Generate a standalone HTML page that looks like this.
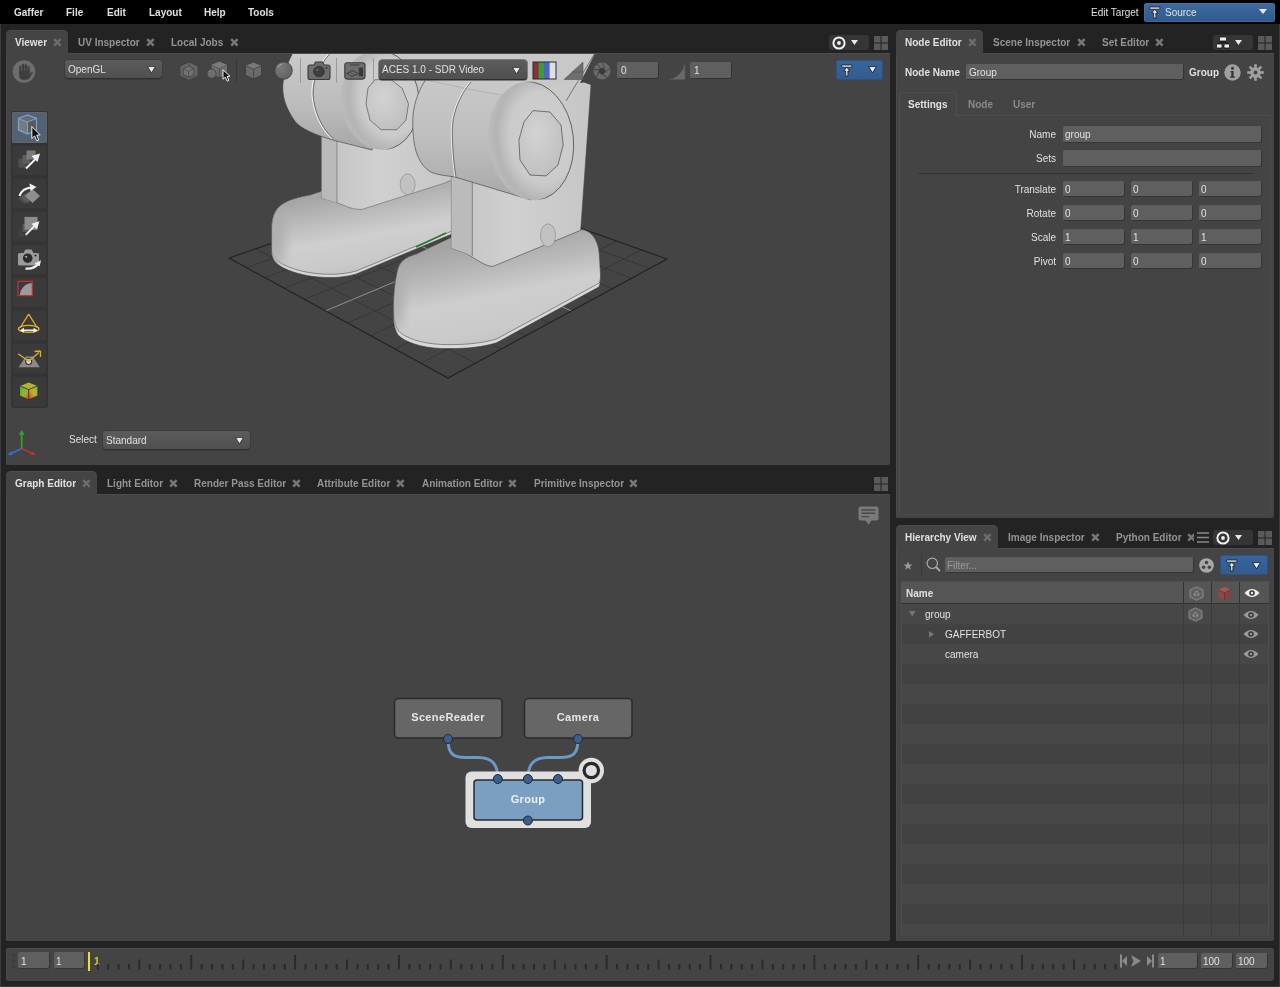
<!DOCTYPE html><html><head><meta charset="utf-8"><style>
html,body{margin:0;padding:0;} body{width:1280px;height:987px;position:relative;overflow:hidden;background:#232323;font-family:"Liberation Sans", sans-serif;}
.t{position:absolute;white-space:nowrap;will-change:transform;}
svg{overflow:visible}
</style></head><body>
<div style="position:absolute;left:0px;top:24px;width:1px;height:963px;background:#3c3c3c"></div>
<div style="position:absolute;left:1279px;top:24px;width:1px;height:963px;background:#3c3c3c"></div>
<div style="position:absolute;left:0px;top:986px;width:1280px;height:1px;background:#3c3c3c"></div>
<div style="position:absolute;left:0px;top:0px;width:1280px;height:24px;background:#000"></div>
<div class="t" style="left:14px;top:7.54px;font-size:10px;line-height:10px;font-weight:bold;color:#e0e0e0;">Gaffer</div>
<div class="t" style="left:66px;top:7.54px;font-size:10px;line-height:10px;font-weight:bold;color:#e0e0e0;">File</div>
<div class="t" style="left:106.5px;top:7.54px;font-size:10px;line-height:10px;font-weight:bold;color:#e0e0e0;">Edit</div>
<div class="t" style="left:149px;top:7.54px;font-size:10px;line-height:10px;font-weight:bold;color:#e0e0e0;">Layout</div>
<div class="t" style="left:203.5px;top:7.54px;font-size:10px;line-height:10px;font-weight:bold;color:#e0e0e0;">Help</div>
<div class="t" style="left:248px;top:7.54px;font-size:10px;line-height:10px;font-weight:bold;color:#e0e0e0;">Tools</div>
<div class="t" style="left:1091px;top:7.54px;font-size:10px;line-height:10px;font-weight:normal;color:#e0e0e0;">Edit Target</div>
<div style="position:absolute;left:1144px;top:2.5px;width:130.5px;height:19.3px;background:linear-gradient(#3d6aa0,#2f5a8c);border-radius:3px;box-shadow:inset 0 0 0 0.6px #4a78ad"></div>
<div class="t" style="left:1165px;top:7.54px;font-size:10px;line-height:10px;font-weight:normal;color:#e0e0e0;">Source</div>
<svg style="position:absolute;left:1149px;top:6px;" width="12" height="13" viewBox="0 0 12 13"><g transform="translate(0.7,0.7)"><path d="M0,0.3H10.2V2.5H0Z M5.1,2.6L8.2,6.3H6.2V11.4H4V6.3H2Z" fill="#f0f0f0" stroke="#151515" stroke-width="0.8" stroke-linejoin="round"/></g></svg>
<svg style="position:absolute;left:1259px;top:9px;" width="9" height="6" viewBox="0 0 9 6"><path d="M0,0H8L4,5z" fill="#e8e8e8"/></svg>
<div style="position:absolute;left:6px;top:53px;width:884px;height:412px;background:#444444;border-radius:0 0 2px 2px;box-shadow:inset 0 1px 0 #4c4c4c, inset 1px 0 0 #4b4b4b"></div>
<svg style="position:absolute;left:6px;top:54px;overflow:hidden" width="884" height="410" viewBox="0 0 884 410"><svg x="0" y="0" width="884" height="410" viewBox="6 54 884 410" style="overflow:hidden"><path d="M246.6,267.7L469.2,188.5M255.7,248.9L475.5,363.1" stroke="#363636" stroke-width="0.9" fill="none"/><path d="M265.0,277.7L488.0,195.2M281.2,240.1L501.5,349.0" stroke="#363636" stroke-width="0.9" fill="none"/><path d="M284.2,288.3L507.5,202.1M305.6,231.8L526.0,335.6" stroke="#363636" stroke-width="0.9" fill="none"/><path d="M304.4,299.3L527.8,209.4M329.0,223.8L549.3,322.9" stroke="#363636" stroke-width="0.9" fill="none"/><path d="M325.5,310.9L548.8,216.9M351.4,216.1L571.4,310.9" stroke="#9a9a9a" stroke-width="0.9" fill="none"/><path d="M347.6,323.0L570.6,224.6M373.0,208.7L592.4,299.5" stroke="#363636" stroke-width="0.9" fill="none"/><path d="M370.8,335.7L593.3,232.7M393.6,201.6L612.4,288.6" stroke="#363636" stroke-width="0.9" fill="none"/><path d="M395.2,349.1L616.9,241.1M413.5,194.8L631.5,278.3" stroke="#363636" stroke-width="0.9" fill="none"/><path d="M420.9,363.2L641.4,249.9M432.6,188.3L649.7,268.4" stroke="#363636" stroke-width="0.9" fill="none"/><path d="M229.0,258.0L448.0,378.0L667.0,259.0L451.0,182.0Z" stroke="#222" stroke-width="1.1" fill="none"/>
<defs>
<filter id="bl6" x="-50%" y="-50%" width="200%" height="200%"><feGaussianBlur stdDeviation="6"/></filter>
<filter id="bl3" x="-50%" y="-50%" width="200%" height="200%"><feGaussianBlur stdDeviation="3"/></filter>
<linearGradient id="gLF" gradientUnits="userSpaceOnUse" x1="345" y1="196" x2="360" y2="278">
 <stop offset="0" stop-color="#a6a6a6"/><stop offset="0.3" stop-color="#bdbdbd"/><stop offset="0.55" stop-color="#cfcfcf"/><stop offset="0.85" stop-color="#c9c9c9"/><stop offset="1" stop-color="#c0c0c0"/></linearGradient>
<linearGradient id="gRF" gradientUnits="userSpaceOnUse" x1="485" y1="245" x2="505" y2="348">
 <stop offset="0" stop-color="#a4a4a4"/><stop offset="0.28" stop-color="#b9b9b9"/><stop offset="0.52" stop-color="#cecece"/><stop offset="0.85" stop-color="#cacaca"/><stop offset="1" stop-color="#c1c1c1"/></linearGradient>
<linearGradient id="gShin" x1="0" y1="0" x2="1" y2="0">
 <stop offset="0" stop-color="#c3c3c3"/><stop offset="0.45" stop-color="#d0d0d0"/><stop offset="1" stop-color="#c6c6c6"/></linearGradient>
<linearGradient id="gCylR" gradientUnits="userSpaceOnUse" x1="413" y1="0" x2="574" y2="0">
 <stop offset="0" stop-color="#b3b3b3"/><stop offset="0.2" stop-color="#c6c6c6"/><stop offset="0.42" stop-color="#cdcdcd"/><stop offset="0.5" stop-color="#b4b4b4"/><stop offset="0.62" stop-color="#c8c8c8"/><stop offset="1" stop-color="#c2c2c2"/></linearGradient>
<linearGradient id="gCylL" gradientUnits="userSpaceOnUse" x1="283" y1="0" x2="419" y2="0">
 <stop offset="0" stop-color="#b0b0b0"/><stop offset="0.2" stop-color="#c0c0c0"/><stop offset="0.38" stop-color="#c9c9c9"/><stop offset="0.47" stop-color="#b3b3b3"/><stop offset="0.6" stop-color="#c8c8c8"/><stop offset="1" stop-color="#c4c4c4"/></linearGradient>
<radialGradient id="gDisc" cx="0.4" cy="0.35" r="0.75">
 <stop offset="0" stop-color="#d3d3d3"/><stop offset="1" stop-color="#bebebe"/></radialGradient>
<linearGradient id="gBodyL" gradientUnits="userSpaceOnUse" x1="0" y1="55" x2="0" y2="150">
 <stop offset="0" stop-color="#c9c9c9"/><stop offset="0.5" stop-color="#bdbdbd"/><stop offset="1" stop-color="#a6a6a6"/></linearGradient>
<linearGradient id="gBodyR" gradientUnits="userSpaceOnUse" x1="0" y1="80" x2="0" y2="200">
 <stop offset="0" stop-color="#c8c8c8"/><stop offset="0.5" stop-color="#bebebe"/><stop offset="1" stop-color="#a8a8a8"/></linearGradient>
<radialGradient id="gRing" cx="0.62" cy="0.5" r="0.62" fx="0.66" fy="0.45">
 <stop offset="0" stop-color="#d0d0d0"/><stop offset="0.62" stop-color="#cbcbcb"/><stop offset="0.85" stop-color="#b4b4b4"/><stop offset="1" stop-color="#bcbcbc"/></radialGradient>
<linearGradient id="gRingStroke" x1="0" y1="0" x2="1" y2="0">
 <stop offset="0" stop-color="#3a3a3a" stop-opacity="0"/><stop offset="0.5" stop-color="#3a3a3a" stop-opacity="0"/><stop offset="0.62" stop-color="#3a3a3a" stop-opacity="1"/><stop offset="1" stop-color="#3a3a3a" stop-opacity="1"/></linearGradient>
<clipPath id="cRF"><path id="pRF" d="M393.4,314C393,300 394,285 397,272C399,262 405,257 415.8,254.3L450,238L581,229.5C590,230 597,238 599,251L600.5,275L600,284L598.8,287L496.5,342.8C480,348 460,349 441.5,348.5C420,347.5 405,342 398,335C394,328 393.4,322 393.4,314Z"/></clipPath>
<clipPath id="cLF"><path d="M271.5,227C272,215 276,209 281,205C289,199 300,197 310,195L323,190.8L452,176L452,234L355.8,274.2C345,277 337,277.5 329.8,277.5C315,277.5 300,275 288,270C278,266 272,261 271.5,252Z"/></clipPath>
</defs>
<!-- top knee region -->
<path d="M292.5,53.5L595,53.5L580,83L591,86L545,100L470,100L424,100L300,70Z" fill="#c8c8c8"/>
<!-- LEFT FOOT -->
<g clip-path="url(#cLF)">
<rect x="260" y="170" width="200" height="120" fill="#d8d8d8"/>
<path d="M271.5,227C272,215 276,209 281,205C289,199 300,197 310,195L323,190.8L452,176L452,234L355.8,274.2C345,277 337,277.5 329.8,277.5C315,277.5 300,275 288,270C278,266 272,261 271.5,252Z" transform="translate(0.5,-3.2)" fill="url(#gLF)" stroke="#505050" stroke-width="0.6"/>
<ellipse cx="276" cy="238" rx="8" ry="30" fill="#acacac" filter="url(#bl6)"/>
</g>
<path d="M271.5,227C272,215 276,209 281,205C289,199 300,197 310,195L323,190.8L452,176L452,234L355.8,274.2C345,277 337,277.5 329.8,277.5C315,277.5 300,275 288,270C278,266 272,261 271.5,252Z" fill="none" stroke="#3a3a3a" stroke-width="0.6"/>
<!-- LEFT SHIN -->
<path d="M321.7,130L321.7,198L339.6,203.7C348,207 352,209.4 362,209.4L443.3,183.5L452,180L452,95L400,118Z" fill="url(#gShin)" stroke="#555" stroke-width="0.5"/>
<path d="M321.7,135L321.7,198L337,203L337,140Z" fill="#b9b9b9"/>
<path d="M337,140V203" stroke="#555" stroke-width="0.5"/>
<ellipse cx="407.6" cy="184.3" rx="7.5" ry="10.3" fill="#c2c2c2" stroke="#777" stroke-width="0.5"/>
<path d="M416,247L446,233" stroke="#2d7a2d" stroke-width="1.8"/>
<!-- LEFT CYLINDER -->
<path d="M292.5,53.5C288,62 283,74 282.7,88C283,100 287,110 295.3,121.7C300,127 307,131 320,136L335,140.6L372,150L381,100L381,53.5Z" fill="url(#gBodyL)" stroke="#3a3a3a" stroke-width="0.6"/>
<ellipse cx="380" cy="100" rx="39" ry="50" fill="url(#gRing)" stroke="url(#gRingStroke)" stroke-width="0.7" transform="rotate(-6 380 100)"/>
<path d="M329,53.5C318,66 311,80 312,95C313,110 320,128 332,138.6" fill="none" stroke="#f0f0f0" stroke-width="1.2"/>
<path d="M330,53.5C319,66 312.5,80 313.2,95C314,110 321,128 333,138.6" fill="none" stroke="#333" stroke-width="0.6"/>
<path d="M375,79.7L391,79.7L402,88L408.5,104L406,120L397,129.7L381,129.7L370,120L366,104L368,88Z" fill="url(#gDisc)" stroke="#444" stroke-width="0.6"/>
<!-- RIGHT FOOT -->
<g clip-path="url(#cRF)">
<rect x="385" y="220" width="225" height="135" fill="#d9d9d9"/>
<path d="M393.4,314C393,300 394,285 397,272C399,262 405,257 415.8,254.3L450,238L581,229.5C590,230 597,238 599,251L600.5,275L600,284L598.8,287L496.5,342.8C480,348 460,349 441.5,348.5C420,347.5 405,342 398,335C394,328 393.4,322 393.4,314Z" transform="translate(0.5,-4)" fill="url(#gRF)" stroke="#505050" stroke-width="0.6"/>
<ellipse cx="396" cy="296" rx="7" ry="34" fill="#acacac" filter="url(#bl6)"/>
</g>
<path d="M393.4,314C393,300 394,285 397,272C399,262 405,257 415.8,254.3L450,238L581,229.5C590,230 597,238 599,251L600.5,275L600,284L598.8,287L496.5,342.8C480,348 460,349 441.5,348.5C420,347.5 405,342 398,335C394,328 393.4,322 393.4,314Z" fill="none" stroke="#3a3a3a" stroke-width="0.6"/>
<!-- RIGHT SHIN -->
<path d="M451.4,100L451.4,248L465,253C478,260 485,266.4 493,266.4L580.7,230.3L591,85L584,82.6Z" fill="url(#gShin)"/><path d="M451.4,100L451.4,248L465,253C478,260 485,266.4 493,266.4L580.7,230.3L591,85" fill="none" stroke="#444" stroke-width="0.6"/><path d="M594.7,53.5L566,101" stroke="#3a3a3a" stroke-width="0.6"/>
<path d="M451.4,150L451.4,248L465,253L472.3,256L472.3,160Z" fill="#bbbbbb"/>
<path d="M472.3,175V256" stroke="#555" stroke-width="0.6"/>
<ellipse cx="548" cy="235.3" rx="7.5" ry="11.5" fill="#c2c2c2" stroke="#777" stroke-width="0.5"/>
<!-- RIGHT CYLINDER -->
<path d="M425.6,79.7C420,88 414.7,100 413,115C412.3,128 413,145 417.8,156C421,164 426,170 433,173L441,175L455,177L531,200L531,85L502,95L468,89Z" fill="url(#gBodyR)"/><path d="M425.6,79.7C420,88 414.7,100 413,115C412.3,128 413,145 417.8,156C421,164 426,170 433,173L441,175L455,177L531,200" fill="none" stroke="#3a3a3a" stroke-width="0.6"/><path d="M425.6,79.7L468,89L502,95L520,90" fill="none" stroke="#9a9a9a" stroke-width="0.5"/>
<path d="M470,82C458,96 451,115 451.3,131.6C451.5,150 453,165 455,177" fill="none" stroke="#ececec" stroke-width="1.1"/>
<path d="M471,82C459,96 452,115 452.3,131.6C452.5,150 454,165 456,177" fill="none" stroke="#383838" stroke-width="0.6"/>
<ellipse cx="531" cy="141" rx="42.5" ry="59.4" fill="url(#gRing)" stroke="url(#gRingStroke)" stroke-width="0.7" transform="rotate(-6 531 141)"/>
<path d="M533,110.6L550,112L561,125L563.2,145L558,165L546,175.9L530,175L520,160L518.9,140L524,122Z" fill="url(#gDisc)" stroke="#333" stroke-width="0.6"/>
</svg></svg>
<div style="position:absolute;left:6px;top:30px;width:62px;height:24px;background:#444444;border-radius:5px 5px 0 0;box-shadow:inset 0 1px 0 #4c4c4c"></div>
<div class="t" style="left:15px;top:37.53px;font-size:10px;line-height:10px;font-weight:bold;color:#e0e0e0;">Viewer</div>
<svg style="position:absolute;left:52.7px;top:37.5px" width="9" height="9"><path d="M1.2,1.2L7.6,7.6M7.6,1.2L1.2,7.6" stroke="#6c6c6c" stroke-width="2.5"/></svg>
<div class="t" style="left:78.25px;top:37.53px;font-size:10px;line-height:10px;font-weight:bold;color:#949494;">UV Inspector</div>
<svg style="position:absolute;left:145.7px;top:37.5px" width="9" height="9"><path d="M1.2,1.2L7.6,7.6M7.6,1.2L1.2,7.6" stroke="#777777" stroke-width="2.5"/></svg>
<div class="t" style="left:171.25px;top:37.53px;font-size:10px;line-height:10px;font-weight:bold;color:#949494;">Local Jobs</div>
<svg style="position:absolute;left:229.7px;top:37.5px" width="9" height="9"><path d="M1.2,1.2L7.6,7.6M7.6,1.2L1.2,7.6" stroke="#777777" stroke-width="2.5"/></svg>
<div style="position:absolute;left:829px;top:35px;width:40px;height:15px;background:#353535;border-radius:3px"></div>
<svg style="position:absolute;left:832px;top:36px;" width="14" height="14" viewBox="0 0 14 14"><circle cx="7" cy="7" r="5.6" fill="none" stroke="#f0f0f0" stroke-width="2"/><circle cx="7" cy="7" r="1.9" fill="#f0f0f0"/></svg>
<svg style="position:absolute;left:851px;top:40px;" width="8" height="6" viewBox="0 0 8 6"><path d="M0,0H7L3.5,5z" fill="#e8e8e8"/></svg>
<svg style="position:absolute;left:873.5px;top:35.5px;" width="14" height="14" viewBox="0 0 14 14"><g fill="#5a5a5a"><rect x="0" y="0" width="6.5" height="6.5"/><rect x="7.5" y="0" width="6.5" height="6.5"/><rect x="0" y="7.5" width="6.5" height="6.5"/><rect x="7.5" y="7.5" width="6.5" height="6.5"/></g></svg>
<svg style="position:absolute;left:12px;top:60px;" width="24" height="24" viewBox="0 0 24 24"><circle cx="12" cy="11.5" r="11.3" fill="#6d6d6d"/><g fill="#3e3e3e"><rect x="7.2" y="5.5" width="2.3" height="9" rx="1.15"/><rect x="10" y="3.8" width="2.3" height="9" rx="1.15"/><rect x="12.8" y="4.3" width="2.3" height="9" rx="1.15"/><rect x="15.5" y="6" width="2.2" height="8" rx="1.1"/><path d="M7.2,11H17.7V14.5L19.5,12Q20.3,11.3 20.8,12Q21,12.6 20.4,13.4L17.3,18.2Q16,19.8 13.6,19.8H11.4Q7.2,19.8 7.2,15.5Z"/></g></svg>
<div style="position:absolute;left:65px;top:60px;width:97px;height:19px;background:linear-gradient(#5c5c5c,#4f4f4f);border-radius:3px;box-shadow:inset 0 -1px 0 #2d2d2d, 0 0 0 0.5px #353535"></div>
<div class="t" style="left:68px;top:65.03px;font-size:10px;line-height:10px;font-weight:normal;color:#e0e0e0;">OpenGL</div>
<svg style="position:absolute;left:147px;top:66.0px;" width="9" height="8" viewBox="0 0 9 8"><path d="M0.6,0.6H8.4L4.5,6.8z" fill="#eeeeee" stroke="#222" stroke-width="0.7" stroke-linejoin="round"/></svg>
<svg style="position:absolute;left:179px;top:61px;" width="20" height="20" viewBox="0 0 20 20"><path d="M10,0.8L19.2,5.2V15L10,19.4L0.8,15V5.2Z" fill="#656565" stroke="#3c3c3c" stroke-width="0.9"/><path d="M10,1V5.5M3,14.2L10,17.5L17,14.2" stroke="#4c4c4c" stroke-width="0.8" fill="none"/><path d="M9.5,5.2L14.8,7.8V13.6L9.5,16.2L4.2,13.6V7.8Z" fill="#737373" stroke="#444" stroke-width="0.8"/><path d="M4.2,7.8L9.5,10.4L14.8,7.8M9.5,10.4V16.2" fill="none" stroke="#4a4a4a" stroke-width="0.8"/></svg>
<svg style="position:absolute;left:205px;top:61px;" width="24" height="19" viewBox="0 0 24 19"><path d="M6,4L14.3,0.5L22.5,4V13.5L14.3,17L6,13.5Z" fill="#6e6e6e" stroke="#3c3c3c" stroke-width="0.9"/><path d="M6,4L14.3,7.3L22.5,4M14.3,7.3V17" fill="none" stroke="#444" stroke-width="0.9"/><path d="M6,4L14.3,0.5L22.5,4L14.3,7.3Z" fill="#7a7a7a"/><circle cx="6.6" cy="12.8" r="4.6" fill="#6e6e6e" stroke="#3c3c3c" stroke-width="0.8"/><path d="M4,11Q4.8,9.6 6.2,9.3" stroke="#999" stroke-width="0.8" fill="none"/></svg>
<svg style="position:absolute;left:221.5px;top:68.5px;" width="9" height="13" viewBox="0 0 9 13"><path d="M1,0.8V10.2L3.3,8.2L5.2,12.2L6.9,11.4L5.1,7.5L8,7.3Z" fill="#111" stroke="#eee" stroke-width="1"/></svg>
<div style="position:absolute;left:235.5px;top:58px;width:1px;height:24px;background:#383838"></div>
<svg style="position:absolute;left:245px;top:62px;" width="17" height="17.5" viewBox="0 0 17 17.5"><path d="M8.5,0.5L16.5,3.8V13.3L8.5,17L0.5,13.3V3.8Z" fill="#6a6a6a" stroke="#3c3c3c" stroke-width="0.9"/><path d="M0.5,3.8L8.5,0.5L16.5,3.8L8.5,7.2Z" fill="#787878"/><path d="M0.5,3.8L8.5,7.2L16.5,3.8M8.5,7.2V17" fill="none" stroke="#444" stroke-width="0.9"/></svg>
<svg style="position:absolute;left:273.5px;top:61px;" width="19" height="19" viewBox="0 0 19 19"><defs><radialGradient id="sph" cx="0.35" cy="0.3" r="0.75"><stop offset="0" stop-color="#7a7a7a"/><stop offset="1" stop-color="#626262"/></radialGradient></defs><circle cx="9.5" cy="9.5" r="8.8" fill="url(#sph)" stroke="#3c3c3c" stroke-width="0.8"/><path d="M3.8,6.5Q5,3.6 7.8,3" stroke="#b0b0b0" stroke-width="1" fill="none"/></svg>
<div style="position:absolute;left:300px;top:58px;width:1px;height:24.5px;background:#9a9a9a"></div>
<svg style="position:absolute;left:306.5px;top:60.5px;" width="24" height="20" viewBox="0 0 24 20"><path d="M7,4L8.5,1H15.5L17,4H21Q23,4 23,6V16.5Q23,18.5 21,18.5H3Q1,18.5 1,16.5V6Q1,4 3,4Z" fill="#6e6e6e" stroke="#3a3a3a" stroke-width="1.1"/><circle cx="12" cy="10.5" r="5.3" fill="#3e3e3e" stroke="#303030" stroke-width="0.8"/><circle cx="10.3" cy="8.8" r="0.9" fill="#8a8a8a"/><circle cx="19.5" cy="7" r="1" fill="#3a3a3a"/></svg>
<div style="position:absolute;left:336px;top:58px;width:1px;height:24.5px;background:#9a9a9a"></div>
<svg style="position:absolute;left:343.5px;top:61.5px;" width="22" height="18" viewBox="0 0 22 18"><rect x="0.8" y="0.8" width="20.2" height="16.3" rx="2.5" fill="#6e6e6e" stroke="#3a3a3a" stroke-width="1.1"/><path d="M6,3H15.5" stroke="#3a3a3a" stroke-width="1"/><path d="M2.5,11.5L8,8.5L14.5,11.5L8,14.5Z" fill="none" stroke="#3a3a3a" stroke-width="0.9"/><path d="M5,10L11.5,13" stroke="#3a3a3a" stroke-width="0.6"/><rect x="14.8" y="5.5" width="4.2" height="8.8" fill="#3a3a3a"/></svg>
<div style="position:absolute;left:372.5px;top:58px;width:1px;height:24.5px;background:#9a9a9a"></div>
<div style="position:absolute;left:379px;top:60px;width:148px;height:20px;background:linear-gradient(#5c5c5c,#4f4f4f);border-radius:3px;box-shadow:inset 0 -1px 0 #2d2d2d, 0 0 0 0.5px #353535"></div>
<div class="t" style="left:382px;top:64.53px;font-size:10px;line-height:10px;font-weight:normal;color:#e0e0e0;">ACES 1.0 - SDR Video</div>
<svg style="position:absolute;left:512px;top:66.5px;" width="9" height="8" viewBox="0 0 9 8"><path d="M0.6,0.6H8.4L4.5,6.8z" fill="#eeeeee" stroke="#222" stroke-width="0.7" stroke-linejoin="round"/></svg>
<svg style="position:absolute;left:532px;top:61px;" width="25" height="19" viewBox="0 0 25 19"><rect x="0.5" y="0.5" width="24" height="18" fill="#2a2a2a"/><rect x="1.5" y="1.5" width="5" height="16" fill="#8c3232"/><rect x="6.5" y="1.5" width="5.5" height="16" fill="#3f9a3f"/><rect x="12" y="1.5" width="5.5" height="16" fill="#4a64c8"/><rect x="17.5" y="1.5" width="6" height="16" fill="#e0e0e0"/></svg>
<svg style="position:absolute;left:563px;top:61px;" width="21" height="19" viewBox="0 0 21 19"><path d="M1,18.5L20,1V18.5Z" fill="#6e6e6e" stroke="#555" stroke-width="0.6"/><path d="M9,11H20" stroke="#5a5a5a" stroke-width="1"/></svg>
<svg style="position:absolute;left:593px;top:62px;" width="19" height="18" viewBox="0 0 19 18"><circle cx="9" cy="9" r="8.5" fill="#6a6a6a"/><circle cx="9" cy="9" r="3.2" fill="#3a3a3a"/><g stroke="#444" stroke-width="1"><path d="M9,0.5L12,6.2M17.2,6.5L11.9,9.7M14.6,15.5L9,12.4M3.2,15.3L6,9.6M0.7,7.5L6.2,7.8M4,2L7.5,6.5"/></g></svg>
<div style="position:absolute;left:617px;top:62px;width:42px;height:17px;background:#5f5f5f;border-radius:2px;box-shadow:inset -1px -1px 0 #333"></div>
<div class="t" style="left:620.5px;top:65.53px;font-size:10px;line-height:10px;font-weight:normal;color:#e0e0e0;">0</div>
<svg style="position:absolute;left:668px;top:62px;" width="18" height="18" viewBox="0 0 18 18"><path d="M1,17.5Q14,15 17,1V17.5Z" fill="#6a6a6a" stroke="#555" stroke-width="0.5"/></svg>
<div style="position:absolute;left:690px;top:62px;width:42px;height:17px;background:#5f5f5f;border-radius:2px;box-shadow:inset -1px -1px 0 #333"></div>
<div class="t" style="left:693.5px;top:65.53px;font-size:10px;line-height:10px;font-weight:normal;color:#e0e0e0;">1</div>
<div style="position:absolute;left:836px;top:60px;width:47px;height:19.5px;background:linear-gradient(#3566a0,#335b8c);border-radius:3px;box-shadow:inset 0 0 0 0.7px #2a4f7c"></div>
<svg style="position:absolute;left:841px;top:63.5px;" width="12" height="13" viewBox="0 0 12 13"><g transform="translate(0.7,0.7)"><path d="M0,0.3H10.2V2.5H0Z M5.1,2.6L8.2,6.3H6.2V11.4H4V6.3H2Z" fill="#f0f0f0" stroke="#151515" stroke-width="0.8" stroke-linejoin="round"/></g></svg>
<svg style="position:absolute;left:868px;top:66px;" width="9" height="8" viewBox="0 0 9 8"><path d="M0.6,0.6H8.4L4.5,6.8z" fill="#eeeeee" stroke="#151515" stroke-width="0.8" stroke-linejoin="round"/></svg>
<div style="position:absolute;left:10.5px;top:111px;width:37px;height:297px;background:#333;border-radius:3px"></div>
<div style="position:absolute;left:11.5px;top:111.5px;width:35px;height:31px;background:#536170;border-radius:2px;box-shadow:inset 0 0 0 1px #5a6774"></div>
<div style="position:absolute;left:11.5px;top:144.5px;width:35px;height:31px;background:#3a3a3a;border-radius:2px;box-shadow:inset 0 0 0 1px #353535"></div>
<div style="position:absolute;left:11.5px;top:177.5px;width:35px;height:31px;background:#3a3a3a;border-radius:2px;box-shadow:inset 0 0 0 1px #353535"></div>
<div style="position:absolute;left:11.5px;top:210.5px;width:35px;height:31px;background:#3a3a3a;border-radius:2px;box-shadow:inset 0 0 0 1px #353535"></div>
<div style="position:absolute;left:11.5px;top:243.5px;width:35px;height:31px;background:#3a3a3a;border-radius:2px;box-shadow:inset 0 0 0 1px #353535"></div>
<div style="position:absolute;left:11.5px;top:276.5px;width:35px;height:31px;background:#3a3a3a;border-radius:2px;box-shadow:inset 0 0 0 1px #353535"></div>
<div style="position:absolute;left:11.5px;top:309.5px;width:35px;height:31px;background:#3a3a3a;border-radius:2px;box-shadow:inset 0 0 0 1px #353535"></div>
<div style="position:absolute;left:11.5px;top:342.5px;width:35px;height:31px;background:#3a3a3a;border-radius:2px;box-shadow:inset 0 0 0 1px #353535"></div>
<div style="position:absolute;left:11.5px;top:375.5px;width:35px;height:31px;background:#3a3a3a;border-radius:2px;box-shadow:inset 0 0 0 1px #353535"></div>
<svg style="position:absolute;left:11.5px;top:112px;" width="35" height="31" viewBox="0 0 35 31"><path d="M15.5,3L24.5,6.5V18L15.5,22L6.5,18V6.5Z" fill="#7a7a7a" stroke="#6fa6d8" stroke-width="1.1"/><path d="M6.5,6.5L15.5,10L24.5,6.5L15.5,3Z" fill="#6a6a6a"/><path d="M15.5,10V22L24.5,18V6.5Z" fill="#5a5a5a"/><path d="M6.5,6.5L15.5,10L24.5,6.5M15.5,10V22" fill="none" stroke="#6fa6d8" stroke-width="1"/><path d="M6.5,6.5L15.5,3L24.5,6.5V18L15.5,22L6.5,18Z" fill="none" stroke="#6fa6d8" stroke-width="1.1"/><path d="M19.8,14.5V26.5L22.6,24L24.8,28.8L26.8,27.9L24.7,23.2L28.2,22.9Z" fill="#111" stroke="#f0f0f0" stroke-width="1"/></svg>
<svg style="position:absolute;left:11.5px;top:145px;" width="35" height="31" viewBox="0 0 35 31"><rect x="6.5" y="13.6" width="7.5" height="9" fill="#505050"/><rect x="10.4" y="10" width="7.5" height="8.7" fill="#5e5e5e"/><rect x="14.5" y="5.5" width="9" height="9" fill="#7a7a7a"/><path d="M14,23.5L24,13.5" stroke="#f0f0f0" stroke-width="2"/><path d="M28,8.5L19.5,11L25.5,17Z" fill="#f0f0f0"/></svg>
<svg style="position:absolute;left:11.5px;top:178px;" width="35" height="31" viewBox="0 0 35 31"><path d="M6,21L13,15L20,21L13,26Z" fill="#4c4c4c"/><path d="M9,20L16,14L22,20L15,25Z" fill="#5c5c5c"/><path d="M13,18L20.5,11L28,18L20.5,25Z" fill="#8e8e8e"/><path d="M7.5,18Q10,10 20,9.5" stroke="#f0f0f0" stroke-width="2.2" fill="none"/><path d="M24.5,9L17.5,5.5L18.5,13Z" fill="#f0f0f0"/></svg>
<svg style="position:absolute;left:11.5px;top:211px;" width="35" height="31" viewBox="0 0 35 31"><path d="M8,19.5V24H12.5" fill="none" stroke="#505050" stroke-width="0.9"/><rect x="10.5" y="13" width="7" height="8" fill="#585858"/><rect x="12.5" y="5.9" width="13" height="12.9" fill="#8c8c8c"/><path d="M13.7,23.8L23.5,14" stroke="#f0f0f0" stroke-width="1.8"/><path d="M27.4,10.2L19.5,12.8L25,18.2Z" fill="#f0f0f0"/></svg>
<svg style="position:absolute;left:11.5px;top:244px;" width="35" height="31" viewBox="0 0 35 31"><path d="M7.5,9H11.5L13.5,5.5H19.5L21.5,9H25.5Q27,9 27,10.5V20Q27,21.5 25.5,21.5H7.5Q6,21.5 6,20V10.5Q6,9 7.5,9Z" fill="#9a9a9a"/><circle cx="15.7" cy="14.2" r="4.8" fill="#2a2a2a"/><circle cx="14.2" cy="12.8" r="1" fill="#bbb"/><circle cx="23.5" cy="11.5" r="1" fill="#2a2a2a"/><path d="M13.5,24.6Q22,25.5 26.5,19.5" stroke="#f0f0f0" stroke-width="2.2" fill="none"/><path d="M29,16.2L22.5,19.5L27.7,22.3Z" fill="#f0f0f0"/></svg>
<svg style="position:absolute;left:11.5px;top:277px;" width="35" height="31" viewBox="0 0 35 31"><path d="M8,18.3A12.2,12.2 0 0 1 20.2,6.1V18.3Z" fill="#9c9c9c"/><rect x="6" y="4.3" width="14.3" height="14.3" fill="none" stroke="#c83030" stroke-width="1.2"/></svg>
<svg style="position:absolute;left:11.5px;top:310px;" width="35" height="31" viewBox="0 0 35 31"><path d="M16.7,4.1L8,18M16.7,4.1L25.4,18" stroke="#e0b020" stroke-width="1.3" fill="none"/><ellipse cx="16.7" cy="18.8" rx="10.3" ry="3.5" fill="none" stroke="#e0b020" stroke-width="1.3"/><path d="M10.5,20.3H23" stroke="#f0f0f0" stroke-width="1.6"/><path d="M8,20.3L12,17.8V22.8Z M25.5,20.3L21.5,17.8V22.8Z" fill="#f0f0f0"/></svg>
<svg style="position:absolute;left:11.5px;top:343px;" width="35" height="31" viewBox="0 0 35 31"><path d="M6.6,24.3L13.7,13.6H20.8L27.9,24.3Z" fill="#8a8a8a"/><circle cx="16.7" cy="18.5" r="3" fill="#ddd" stroke="#333" stroke-width="1.1"/><path d="M6.1,10.7L16.7,18.2L27,9.5" stroke="#e0b020" stroke-width="1.3" fill="none"/><path d="M28.5,8L22.5,8.5M28.5,8L28.5,14" stroke="#e0b020" stroke-width="1.3" fill="none"/></svg>
<svg style="position:absolute;left:11.5px;top:376px;" width="35" height="31" viewBox="0 0 35 31"><defs><linearGradient id="cgL" x1="0" y1="0" x2="1" y2="1"><stop offset="0" stop-color="#40c030"/><stop offset="0.6" stop-color="#a0b030"/><stop offset="1" stop-color="#e05020"/></linearGradient><linearGradient id="cgR" x1="1" y1="0" x2="0" y2="1"><stop offset="0" stop-color="#80c030"/><stop offset="0.5" stop-color="#c0b030"/><stop offset="1" stop-color="#e04020"/></linearGradient></defs><path d="M8.1,10L16.7,6.4L25.3,10L16.7,13.6Z" fill="#b8b030"/><path d="M8.1,10L16.7,13.6V23.2L8.1,19.6Z" fill="url(#cgL)"/><path d="M25.3,10L16.7,13.6V23.2L25.3,19.6Z" fill="url(#cgR)"/><path d="M8.1,10L16.7,13.6L25.3,10M16.7,13.6V23.2" stroke="#333" stroke-width="0.8" fill="none"/></svg>
<svg style="position:absolute;left:6px;top:428px;" width="34" height="30" viewBox="0 0 34 30"><path d="M15.7,20.5V5" stroke="#30a030" stroke-width="1.8"/><path d="M12.7,7L15.7,2L18.7,7Z" fill="#30a030"/><path d="M15.7,20.5L4,26" stroke="#3a6ad0" stroke-width="1.8"/><path d="M5.5,23L1.5,27L6.8,27Z" fill="#3a6ad0"/><path d="M15.7,20.5L27.5,26" stroke="#c03030" stroke-width="1.8"/><path d="M26,23L30,27L24.7,27Z" fill="#c03030"/></svg>
<div class="t" style="left:68.5px;top:434.54px;font-size:10px;line-height:10px;font-weight:normal;color:#e0e0e0;">Select</div>
<div style="position:absolute;left:103px;top:431px;width:147px;height:19px;background:linear-gradient(#5c5c5c,#4f4f4f);border-radius:3px;box-shadow:inset 0 -1px 0 #2d2d2d, 0 0 0 0.5px #353535"></div>
<div class="t" style="left:106px;top:435.54px;font-size:10px;line-height:10px;font-weight:normal;color:#e0e0e0;">Standard</div>
<svg style="position:absolute;left:235px;top:437.0px;" width="9" height="8" viewBox="0 0 9 8"><path d="M0.6,0.6H8.4L4.5,6.8z" fill="#eeeeee" stroke="#222" stroke-width="0.7" stroke-linejoin="round"/></svg>
<div style="position:absolute;left:6px;top:494px;width:884px;height:447px;background:#444444;border-radius:0 0 2px 2px;box-shadow:inset 0 1px 0 #4c4c4c, inset 1px 0 0 #4b4b4b"></div>
<div style="position:absolute;left:6px;top:471px;width:90.5px;height:24px;background:#444444;border-radius:5px 5px 0 0;box-shadow:inset 0 1px 0 #4c4c4c"></div>
<div class="t" style="left:15px;top:478.54px;font-size:10px;line-height:10px;font-weight:bold;color:#e0e0e0;">Graph Editor</div>
<svg style="position:absolute;left:82.2px;top:478.5px" width="9" height="9"><path d="M1.2,1.2L7.6,7.6M7.6,1.2L1.2,7.6" stroke="#6c6c6c" stroke-width="2.5"/></svg>
<div class="t" style="left:107px;top:478.54px;font-size:10px;line-height:10px;font-weight:bold;color:#949494;">Light Editor</div>
<svg style="position:absolute;left:168.7px;top:478.5px" width="9" height="9"><path d="M1.2,1.2L7.6,7.6M7.6,1.2L1.2,7.6" stroke="#777777" stroke-width="2.5"/></svg>
<div class="t" style="left:194px;top:478.54px;font-size:10px;line-height:10px;font-weight:bold;color:#949494;">Render Pass Editor</div>
<svg style="position:absolute;left:292.2px;top:478.5px" width="9" height="9"><path d="M1.2,1.2L7.6,7.6M7.6,1.2L1.2,7.6" stroke="#777777" stroke-width="2.5"/></svg>
<div class="t" style="left:317px;top:478.54px;font-size:10px;line-height:10px;font-weight:bold;color:#949494;">Attribute Editor</div>
<svg style="position:absolute;left:395.7px;top:478.5px" width="9" height="9"><path d="M1.2,1.2L7.6,7.6M7.6,1.2L1.2,7.6" stroke="#777777" stroke-width="2.5"/></svg>
<div class="t" style="left:421.5px;top:478.54px;font-size:10px;line-height:10px;font-weight:bold;color:#949494;">Animation Editor</div>
<svg style="position:absolute;left:507.7px;top:478.5px" width="9" height="9"><path d="M1.2,1.2L7.6,7.6M7.6,1.2L1.2,7.6" stroke="#777777" stroke-width="2.5"/></svg>
<div class="t" style="left:533.5px;top:478.54px;font-size:10px;line-height:10px;font-weight:bold;color:#949494;">Primitive Inspector</div>
<svg style="position:absolute;left:629.2px;top:478.5px" width="9" height="9"><path d="M1.2,1.2L7.6,7.6M7.6,1.2L1.2,7.6" stroke="#777777" stroke-width="2.5"/></svg>
<svg style="position:absolute;left:873.5px;top:476.5px;" width="14" height="14" viewBox="0 0 14 14"><g fill="#5a5a5a"><rect x="0" y="0" width="6.5" height="6.5"/><rect x="7.5" y="0" width="6.5" height="6.5"/><rect x="0" y="7.5" width="6.5" height="6.5"/><rect x="7.5" y="7.5" width="6.5" height="6.5"/></g></svg>
<svg style="position:absolute;left:859px;top:506px;" width="20" height="20" viewBox="0 0 20 20"><path d="M2,0.5H17Q19.5,0.5 19.5,3V12Q19.5,14.5 17,14.5H12.5L9.5,18.5L6.5,14.5H2Q-0.5,14.5 -0.5,12V3Q-0.5,0.5 2,0.5Z" fill="#7a7a7a"/><path d="M2.5,4H16.5M2.5,7.3H16.5M2.5,10.6H10" stroke="#4a4a4a" stroke-width="1.4"/></svg>
<svg style="position:absolute;left:0px;top:0px;pointer-events:none" width="1280" height="987" viewBox="0 0 1280 987">
<path d="M448,739C448,754 453,757.5 466,757.5L478,757.5C493,757.5 497.8,765 497.8,779" stroke="#6b9ac4" stroke-width="3" fill="none"/>
<path d="M578,739C578,754 573,757.5 560,757.5L548,757.5C533,757.5 527.9,765 527.9,779" stroke="#6b9ac4" stroke-width="3" fill="none"/>
<rect x="394.5" y="698.5" width="107.5" height="39.5" rx="4" fill="#666" stroke="#2a2a2a" stroke-width="1.5"/>
<rect x="524.5" y="698.5" width="107.5" height="39.5" rx="4" fill="#666" stroke="#2a2a2a" stroke-width="1.5"/>
<rect x="465.5" y="771.5" width="125.5" height="56.5" rx="6" fill="#e0e0e0"/>
<circle cx="591.3" cy="770.5" r="12.7" fill="#e0e0e0"/>
<circle cx="591.3" cy="770.5" r="8.8" fill="#2a2a2a"/>
<circle cx="591.3" cy="770.5" r="5.6" fill="#e0e0e0"/>
<rect x="474" y="780" width="108.5" height="40" rx="3" fill="#7a9fc3" stroke="#2a2a2a" stroke-width="1.5"/>
<g fill="#3d5d8a" stroke="#1e2a3a" stroke-width="1">
<circle cx="448" cy="739" r="4.5"/><circle cx="578" cy="739" r="4.5"/>
<circle cx="497.8" cy="779" r="4.5"/><circle cx="527.9" cy="779" r="4.5"/><circle cx="558" cy="779" r="4.5"/>
<circle cx="527.9" cy="820.5" r="4.5"/>
</g>
</svg>
<div class="t" style="left:248px;width:400px;text-align:center;top:712.49px;font-size:11px;line-height:11px;font-weight:bold;color:#e6e6e6;letter-spacing:0.35px">SceneReader</div>
<div class="t" style="left:378px;width:400px;text-align:center;top:712.49px;font-size:11px;line-height:11px;font-weight:bold;color:#e6e6e6;letter-spacing:0.35px">Camera</div>
<div class="t" style="left:328px;width:400px;text-align:center;top:793.69px;font-size:11px;line-height:11px;font-weight:bold;color:#f0f0f0;letter-spacing:0.35px">Group</div>
<div style="position:absolute;left:896px;top:53px;width:378px;height:465px;background:#444444;border-radius:0 0 2px 2px;box-shadow:inset 0 1px 0 #4c4c4c, inset 1px 0 0 #4b4b4b"></div>
<div style="position:absolute;left:896px;top:30px;width:86.5px;height:24px;background:#444444;border-radius:5px 5px 0 0;box-shadow:inset 0 1px 0 #4c4c4c"></div>
<div class="t" style="left:905px;top:37.53px;font-size:10px;line-height:10px;font-weight:bold;color:#e0e0e0;">Node Editor</div>
<svg style="position:absolute;left:967.7px;top:37.5px" width="9" height="9"><path d="M1.2,1.2L7.6,7.6M7.6,1.2L1.2,7.6" stroke="#6c6c6c" stroke-width="2.5"/></svg>
<div class="t" style="left:993px;top:37.53px;font-size:10px;line-height:10px;font-weight:bold;color:#949494;">Scene Inspector</div>
<svg style="position:absolute;left:1076.7px;top:37.5px" width="9" height="9"><path d="M1.2,1.2L7.6,7.6M7.6,1.2L1.2,7.6" stroke="#777777" stroke-width="2.5"/></svg>
<div class="t" style="left:1102px;top:37.53px;font-size:10px;line-height:10px;font-weight:bold;color:#949494;">Set Editor</div>
<svg style="position:absolute;left:1154.7px;top:37.5px" width="9" height="9"><path d="M1.2,1.2L7.6,7.6M7.6,1.2L1.2,7.6" stroke="#777777" stroke-width="2.5"/></svg>
<div style="position:absolute;left:1213px;top:35px;width:40px;height:15px;background:#353535;border-radius:3px"></div>
<svg style="position:absolute;left:1216px;top:36px;" width="15" height="14" viewBox="0 0 15 14"><rect x="3.5" y="1" width="7" height="4" rx="1" fill="#eee" stroke="#111" stroke-width="0.8"/><rect x="0.5" y="8" width="5.5" height="4" rx="1" fill="#eee" stroke="#111" stroke-width="0.8"/><rect x="8" y="8" width="5.5" height="4" rx="1" fill="#eee" stroke="#111" stroke-width="0.8"/><path d="M7,0V1M7,5V6.5H3V8M7,6.5H11V8" stroke="#111" stroke-width="0.8" fill="none"/></svg>
<svg style="position:absolute;left:1235px;top:40px;" width="8" height="6" viewBox="0 0 8 6"><path d="M0,0H7L3.5,5z" fill="#e8e8e8"/></svg>
<svg style="position:absolute;left:1257.5px;top:35.5px;" width="14" height="14" viewBox="0 0 14 14"><g fill="#5a5a5a"><rect x="0" y="0" width="6.5" height="6.5"/><rect x="7.5" y="0" width="6.5" height="6.5"/><rect x="0" y="7.5" width="6.5" height="6.5"/><rect x="7.5" y="7.5" width="6.5" height="6.5"/></g></svg>
<div class="t" style="left:905px;top:67.53px;font-size:10px;line-height:10px;font-weight:bold;color:#e0e0e0;">Node Name</div>
<div style="position:absolute;left:966px;top:63.5px;width:218px;height:16.5px;background:#5f5f5f;border-radius:2px;box-shadow:inset -1px -1px 0 #333"></div>
<div class="t" style="left:969px;top:67.53px;font-size:10px;line-height:10px;font-weight:normal;color:#e0e0e0;">Group</div>
<div class="t" style="left:1189px;top:67.53px;font-size:10px;line-height:10px;font-weight:bold;color:#e0e0e0;">Group</div>
<svg style="position:absolute;left:1223.5px;top:63.5px;" width="17" height="17" viewBox="0 0 17 17"><circle cx="8.5" cy="8.5" r="8.2" fill="#a0a0a0"/><circle cx="8.5" cy="4.3" r="1.5" fill="#333"/><path d="M6.5,7H9.6V12.5H11V13.8H6V12.5H7.3V8.3H6.5Z" fill="#333"/></svg>
<svg style="position:absolute;left:1246.5px;top:63.5px;" width="17" height="17" viewBox="0 0 17 17"><g transform="translate(8.5 8.5)" fill="#a0a0a0"><circle r="5.2"/><rect x="-1.3" y="-8.3" width="2.6" height="5" transform="rotate(0)"/><rect x="-1.3" y="-8.3" width="2.6" height="5" transform="rotate(45)"/><rect x="-1.3" y="-8.3" width="2.6" height="5" transform="rotate(90)"/><rect x="-1.3" y="-8.3" width="2.6" height="5" transform="rotate(135)"/><rect x="-1.3" y="-8.3" width="2.6" height="5" transform="rotate(180)"/><rect x="-1.3" y="-8.3" width="2.6" height="5" transform="rotate(225)"/><rect x="-1.3" y="-8.3" width="2.6" height="5" transform="rotate(270)"/><rect x="-1.3" y="-8.3" width="2.6" height="5" transform="rotate(315)"/></g><circle cx="8.5" cy="8.5" r="2" fill="#444"/></svg>
<div style="position:absolute;left:899px;top:114.5px;width:371.5px;height:400.5px;background:#444444;box-shadow:inset 1px 1px 0 #4e4e4e, inset -1px -1px 0 #4a4a4a;border-radius:0 0 3px 3px"></div>
<div style="position:absolute;left:899px;top:92px;width:57.5px;height:24px;background:#444444;border-radius:4px 4px 0 0;box-shadow:inset 1px 1px 0 #4e4e4e, inset -1px 0 0 #4e4e4e"></div>
<div class="t" style="left:908px;top:99.53px;font-size:10px;line-height:10px;font-weight:bold;color:#e0e0e0;">Settings</div>
<div class="t" style="left:967.5px;top:99.53px;font-size:10px;line-height:10px;font-weight:bold;color:#8a8a8a;">Node</div>
<div class="t" style="left:1012.8px;top:99.53px;font-size:10px;line-height:10px;font-weight:bold;color:#8a8a8a;">User</div>
<div class="t" style="left:656px;width:400px;text-align:right;top:129.53px;font-size:10px;line-height:10px;font-weight:normal;color:#e0e0e0;">Name</div>
<div style="position:absolute;left:1063px;top:125.5px;width:198.5px;height:17px;background:#5f5f5f;border-radius:2px;box-shadow:inset -1px -1px 0 #353535"></div>
<div class="t" style="left:1065.3px;top:129.84px;font-size:10px;line-height:10px;font-weight:normal;color:#e0e0e0;">group</div>
<div class="t" style="left:656px;width:400px;text-align:right;top:153.53px;font-size:10px;line-height:10px;font-weight:normal;color:#e0e0e0;">Sets</div>
<div style="position:absolute;left:1063px;top:150px;width:198.5px;height:16.5px;background:#5f5f5f;border-radius:2px;box-shadow:inset -1px -1px 0 #353535"></div>
<div style="position:absolute;left:918px;top:173px;width:335.5px;height:1px;background:#333"></div>
<div class="t" style="left:656px;width:400px;text-align:right;top:185.34px;font-size:10px;line-height:10px;font-weight:normal;color:#e0e0e0;">Translate</div>
<div style="position:absolute;left:1062.7px;top:180.8px;width:62.5px;height:16.5px;background:#5f5f5f;border-radius:2px;box-shadow:inset -1px -1px 0 #353535"></div>
<div class="t" style="left:1065.0px;top:185.14px;font-size:10px;line-height:10px;font-weight:normal;color:#e0e0e0;">0</div>
<div style="position:absolute;left:1130.5px;top:180.8px;width:62.5px;height:16.5px;background:#5f5f5f;border-radius:2px;box-shadow:inset -1px -1px 0 #353535"></div>
<div class="t" style="left:1132.8px;top:185.14px;font-size:10px;line-height:10px;font-weight:normal;color:#e0e0e0;">0</div>
<div style="position:absolute;left:1198.5px;top:180.8px;width:63px;height:16.5px;background:#5f5f5f;border-radius:2px;box-shadow:inset -1px -1px 0 #353535"></div>
<div class="t" style="left:1200.8px;top:185.14px;font-size:10px;line-height:10px;font-weight:normal;color:#e0e0e0;">0</div>
<div class="t" style="left:656px;width:400px;text-align:right;top:209.34px;font-size:10px;line-height:10px;font-weight:normal;color:#e0e0e0;">Rotate</div>
<div style="position:absolute;left:1062.7px;top:204.8px;width:62.5px;height:16.5px;background:#5f5f5f;border-radius:2px;box-shadow:inset -1px -1px 0 #353535"></div>
<div class="t" style="left:1065.0px;top:209.14px;font-size:10px;line-height:10px;font-weight:normal;color:#e0e0e0;">0</div>
<div style="position:absolute;left:1130.5px;top:204.8px;width:62.5px;height:16.5px;background:#5f5f5f;border-radius:2px;box-shadow:inset -1px -1px 0 #353535"></div>
<div class="t" style="left:1132.8px;top:209.14px;font-size:10px;line-height:10px;font-weight:normal;color:#e0e0e0;">0</div>
<div style="position:absolute;left:1198.5px;top:204.8px;width:63px;height:16.5px;background:#5f5f5f;border-radius:2px;box-shadow:inset -1px -1px 0 #353535"></div>
<div class="t" style="left:1200.8px;top:209.14px;font-size:10px;line-height:10px;font-weight:normal;color:#e0e0e0;">0</div>
<div class="t" style="left:656px;width:400px;text-align:right;top:233.34px;font-size:10px;line-height:10px;font-weight:normal;color:#e0e0e0;">Scale</div>
<div style="position:absolute;left:1062.7px;top:228.8px;width:62.5px;height:16.5px;background:#5f5f5f;border-radius:2px;box-shadow:inset -1px -1px 0 #353535"></div>
<div class="t" style="left:1065.0px;top:233.14px;font-size:10px;line-height:10px;font-weight:normal;color:#e0e0e0;">1</div>
<div style="position:absolute;left:1130.5px;top:228.8px;width:62.5px;height:16.5px;background:#5f5f5f;border-radius:2px;box-shadow:inset -1px -1px 0 #353535"></div>
<div class="t" style="left:1132.8px;top:233.14px;font-size:10px;line-height:10px;font-weight:normal;color:#e0e0e0;">1</div>
<div style="position:absolute;left:1198.5px;top:228.8px;width:63px;height:16.5px;background:#5f5f5f;border-radius:2px;box-shadow:inset -1px -1px 0 #353535"></div>
<div class="t" style="left:1200.8px;top:233.14px;font-size:10px;line-height:10px;font-weight:normal;color:#e0e0e0;">1</div>
<div class="t" style="left:656px;width:400px;text-align:right;top:257.34px;font-size:10px;line-height:10px;font-weight:normal;color:#e0e0e0;">Pivot</div>
<div style="position:absolute;left:1062.7px;top:252.8px;width:62.5px;height:16.5px;background:#5f5f5f;border-radius:2px;box-shadow:inset -1px -1px 0 #353535"></div>
<div class="t" style="left:1065.0px;top:257.14px;font-size:10px;line-height:10px;font-weight:normal;color:#e0e0e0;">0</div>
<div style="position:absolute;left:1130.5px;top:252.8px;width:62.5px;height:16.5px;background:#5f5f5f;border-radius:2px;box-shadow:inset -1px -1px 0 #353535"></div>
<div class="t" style="left:1132.8px;top:257.14px;font-size:10px;line-height:10px;font-weight:normal;color:#e0e0e0;">0</div>
<div style="position:absolute;left:1198.5px;top:252.8px;width:63px;height:16.5px;background:#5f5f5f;border-radius:2px;box-shadow:inset -1px -1px 0 #353535"></div>
<div class="t" style="left:1200.8px;top:257.14px;font-size:10px;line-height:10px;font-weight:normal;color:#e0e0e0;">0</div>
<div style="position:absolute;left:896px;top:548px;width:378px;height:393px;background:#444444;border-radius:0 0 2px 2px;box-shadow:inset 0 1px 0 #4c4c4c, inset 1px 0 0 #4b4b4b"></div>
<div style="position:absolute;left:896px;top:525px;width:102px;height:24px;background:#444444;border-radius:5px 5px 0 0;box-shadow:inset 0 1px 0 #4c4c4c"></div>
<div class="t" style="left:905.2px;top:532.53px;font-size:10px;line-height:10px;font-weight:bold;color:#e0e0e0;">Hierarchy View</div>
<svg style="position:absolute;left:982.7px;top:532.5px" width="9" height="9"><path d="M1.2,1.2L7.6,7.6M7.6,1.2L1.2,7.6" stroke="#6c6c6c" stroke-width="2.5"/></svg>
<div class="t" style="left:1008px;top:532.53px;font-size:10px;line-height:10px;font-weight:bold;color:#949494;">Image Inspector</div>
<svg style="position:absolute;left:1090.7px;top:532.5px" width="9" height="9"><path d="M1.2,1.2L7.6,7.6M7.6,1.2L1.2,7.6" stroke="#777777" stroke-width="2.5"/></svg>
<div class="t" style="left:1116px;top:532.53px;font-size:10px;line-height:10px;font-weight:bold;color:#949494;">Python Editor</div>
<svg style="position:absolute;left:-100.3px;top:532.5px" width="9" height="9"><path d="M1.2,1.2L7.6,7.6M7.6,1.2L1.2,7.6" stroke="#777777" stroke-width="2.5"/></svg>
<div style="position:absolute;left:1186px;top:528px;width:8px;height:20px;overflow:hidden"><svg style="position:absolute;left:0.7px;top:4.5px" width="9" height="9"><path d="M1.2,1.2L7.6,7.6M7.6,1.2L1.2,7.6" stroke="#777777" stroke-width="2.5"/></svg></div>
<div style="position:absolute;left:1194px;top:528px;width:3px;height:20px;background:#232323"></div>
<svg style="position:absolute;left:1197px;top:531.5px;" width="12" height="11" viewBox="0 0 12 11"><path d="M0,1H12M0,5.5H12M0,10H12" stroke="#8a8a8a" stroke-width="1.3"/></svg>
<div style="position:absolute;left:1213px;top:530px;width:40px;height:15px;background:#353535;border-radius:3px"></div>
<svg style="position:absolute;left:1216px;top:531px;" width="14" height="14" viewBox="0 0 14 14"><circle cx="7" cy="7" r="5.6" fill="none" stroke="#f0f0f0" stroke-width="2"/><circle cx="7" cy="7" r="1.9" fill="#f0f0f0"/></svg>
<svg style="position:absolute;left:1235px;top:535px;" width="8" height="6" viewBox="0 0 8 6"><path d="M0,0H7L3.5,5z" fill="#e8e8e8"/></svg>
<svg style="position:absolute;left:1257.5px;top:530.5px;" width="14" height="14" viewBox="0 0 14 14"><g fill="#5a5a5a"><rect x="0" y="0" width="6.5" height="6.5"/><rect x="7.5" y="0" width="6.5" height="6.5"/><rect x="0" y="7.5" width="6.5" height="6.5"/><rect x="7.5" y="7.5" width="6.5" height="6.5"/></g></svg>
<svg style="position:absolute;left:903px;top:561px;" width="10" height="9" viewBox="0 0 10 9"><path d="M5,0.3L6.2,3.5H9.6L6.9,5.5L7.9,8.8L5,6.8L2.1,8.8L3.1,5.5L0.4,3.5H3.8Z" fill="#9a9a9a"/></svg>
<div style="position:absolute;left:921px;top:553px;width:1px;height:23px;background:#3a3a3a"></div>
<svg style="position:absolute;left:926px;top:557px;" width="15" height="15" viewBox="0 0 15 15"><circle cx="6.3" cy="6.3" r="5.2" fill="none" stroke="#aaa" stroke-width="1.2"/><path d="M10,10L14,14" stroke="#aaa" stroke-width="1.8"/></svg>
<div style="position:absolute;left:945px;top:557px;width:249px;height:16px;background:#5f5f5f;border-radius:2px;box-shadow:inset -1px -1px 0 #353535"></div>
<div class="t" style="left:947px;top:560.53px;font-size:10px;line-height:10px;font-weight:normal;color:#9a9a9a;">Filter...</div>
<svg style="position:absolute;left:1199px;top:557.5px;" width="15" height="15" viewBox="0 0 15 15"><circle cx="7.5" cy="7.5" r="7.3" fill="#a8a8a8"/><circle cx="7.5" cy="4.5" r="1.8" fill="#444"/><circle cx="4.6" cy="9.3" r="1.8" fill="#444"/><circle cx="10.4" cy="9.3" r="1.8" fill="#444"/></svg>
<div style="position:absolute;left:1220px;top:555px;width:47.5px;height:19.5px;background:linear-gradient(#3566a0,#335b8c);border-radius:3px;box-shadow:inset 0 0 0 0.7px #2a4f7c"></div>
<svg style="position:absolute;left:1225.5px;top:558.5px;" width="12" height="13" viewBox="0 0 12 13"><g transform="translate(0.7,0.7)"><path d="M0,0.3H10.2V2.5H0Z M5.1,2.6L8.2,6.3H6.2V11.4H4V6.3H2Z" fill="#f0f0f0" stroke="#151515" stroke-width="0.8" stroke-linejoin="round"/></g></svg>
<svg style="position:absolute;left:1252px;top:561.5px;" width="9" height="8" viewBox="0 0 9 8"><path d="M0.6,0.6H8.4L4.5,6.8z" fill="#eeeeee" stroke="#151515" stroke-width="0.8" stroke-linejoin="round"/></svg>
<div style="position:absolute;left:901px;top:581px;width:367.5px;height:355px;background:#474747;box-shadow:inset 0 0 0 1px #4f4f4f"></div>
<div style="position:absolute;left:901px;top:581.5px;width:367.5px;height:21.5px;background:#555;border-bottom:1px solid #333"></div>
<div class="t" style="left:906px;top:588.53px;font-size:10px;line-height:10px;font-weight:bold;color:#e0e0e0;">Name</div>
<div style="position:absolute;left:902px;top:604px;width:365.5px;height:20px;background:#474747"></div>
<div style="position:absolute;left:902px;top:624px;width:365.5px;height:20px;background:#424242"></div>
<div style="position:absolute;left:902px;top:644px;width:365.5px;height:20px;background:#474747"></div>
<div style="position:absolute;left:902px;top:664px;width:365.5px;height:20px;background:#424242"></div>
<div style="position:absolute;left:902px;top:684px;width:365.5px;height:20px;background:#474747"></div>
<div style="position:absolute;left:902px;top:704px;width:365.5px;height:20px;background:#424242"></div>
<div style="position:absolute;left:902px;top:724px;width:365.5px;height:20px;background:#474747"></div>
<div style="position:absolute;left:902px;top:744px;width:365.5px;height:20px;background:#424242"></div>
<div style="position:absolute;left:902px;top:764px;width:365.5px;height:20px;background:#474747"></div>
<div style="position:absolute;left:902px;top:784px;width:365.5px;height:20px;background:#424242"></div>
<div style="position:absolute;left:902px;top:804px;width:365.5px;height:20px;background:#474747"></div>
<div style="position:absolute;left:902px;top:824px;width:365.5px;height:20px;background:#424242"></div>
<div style="position:absolute;left:902px;top:844px;width:365.5px;height:20px;background:#474747"></div>
<div style="position:absolute;left:902px;top:864px;width:365.5px;height:20px;background:#424242"></div>
<div style="position:absolute;left:902px;top:884px;width:365.5px;height:20px;background:#474747"></div>
<div style="position:absolute;left:902px;top:904px;width:365.5px;height:20px;background:#424242"></div>
<div style="position:absolute;left:902px;top:924px;width:365.5px;height:12px;background:#474747"></div>
<div style="position:absolute;left:1183px;top:581.5px;width:1px;height:354.5px;background:#3b3b3b"></div>
<div style="position:absolute;left:1183px;top:581.5px;width:1px;height:21.5px;background:#303030"></div>
<div style="position:absolute;left:1211px;top:581.5px;width:1px;height:354.5px;background:#3b3b3b"></div>
<div style="position:absolute;left:1211px;top:581.5px;width:1px;height:21.5px;background:#303030"></div>
<div style="position:absolute;left:1239px;top:581.5px;width:1px;height:354.5px;background:#3b3b3b"></div>
<div style="position:absolute;left:1239px;top:581.5px;width:1px;height:21.5px;background:#303030"></div>
<svg style="position:absolute;left:1188.5px;top:585.5px;" width="15" height="15" viewBox="0 0 15 15"><path d="M7.5,0.8L14,3.8V11.2L7.5,14.2L1,11.2V3.8Z" fill="#666" stroke="#8c8c8c" stroke-width="0.9"/><path d="M7.5,4.2L11,5.8V9.8L7.5,11.4L4,9.8V5.8Z" fill="#858585" stroke="#4a4a4a" stroke-width="0.6"/><path d="M4,5.8L7.5,7.4L11,5.8M7.5,7.4V11.4" fill="none" stroke="#4a4a4a" stroke-width="0.6"/></svg>
<svg style="position:absolute;left:1216.5px;top:585.5px;" width="15" height="15" viewBox="0 0 15 15"><path d="M7.5,0.8L14,3.8V11.2L7.5,14.2L1,11.2V3.8Z" fill="#8a4a46"/><path d="M1,3.8L7.5,6.8L14,3.8L7.5,0.8Z" fill="#9a5a55"/><path d="M7.5,6.8V14.2L14,11.2V3.8Z" fill="#7e4541"/><path d="M1,3.8L7.5,6.8L14,3.8M7.5,6.8V14.2" fill="none" stroke="#5a2a27" stroke-width="0.6"/></svg>
<svg style="position:absolute;left:1244px;top:588px" width="16" height="10"><path d="M0.5,5Q8,-3 15.5,5Q8,13 0.5,5Z" fill="#eeeeee"/><circle cx="8" cy="5" r="2.8" fill="#3a3a3a"/><circle cx="8" cy="5" r="1.2" fill="#eeeeee"/></svg>
<svg style="position:absolute;left:1187.5px;top:606.5px;" width="15" height="15" viewBox="0 0 15 15"><path d="M7.5,0.8L14,3.8V11.2L7.5,14.2L1,11.2V3.8Z" fill="#666" stroke="#8c8c8c" stroke-width="0.9"/><path d="M7.5,4.2L11,5.8V9.8L7.5,11.4L4,9.8V5.8Z" fill="#858585" stroke="#4a4a4a" stroke-width="0.6"/><path d="M4,5.8L7.5,7.4L11,5.8M7.5,7.4V11.4" fill="none" stroke="#4a4a4a" stroke-width="0.6"/></svg>
<svg style="position:absolute;left:1243px;top:609.5px" width="16" height="10"><path d="M0.5,5Q8,-3 15.5,5Q8,13 0.5,5Z" fill="#9a9a9a"/><circle cx="8" cy="5" r="2.8" fill="#3a3a3a"/><circle cx="8" cy="5" r="1.2" fill="#9a9a9a"/></svg>
<svg style="position:absolute;left:1243px;top:629px" width="16" height="10"><path d="M0.5,5Q8,-3 15.5,5Q8,13 0.5,5Z" fill="#9a9a9a"/><circle cx="8" cy="5" r="2.8" fill="#3a3a3a"/><circle cx="8" cy="5" r="1.2" fill="#9a9a9a"/></svg>
<svg style="position:absolute;left:1243px;top:649px" width="16" height="10"><path d="M0.5,5Q8,-3 15.5,5Q8,13 0.5,5Z" fill="#9a9a9a"/><circle cx="8" cy="5" r="2.8" fill="#3a3a3a"/><circle cx="8" cy="5" r="1.2" fill="#9a9a9a"/></svg>
<svg style="position:absolute;left:908.5px;top:611px;" width="7" height="6" viewBox="0 0 7 6"><path d="M0,0H6.5L3.25,5.5Z" fill="#777"/></svg>
<div class="t" style="left:924.7px;top:609.53px;font-size:10px;line-height:10px;font-weight:normal;color:#e0e0e0;">group</div>
<svg style="position:absolute;left:929px;top:631px;" width="5" height="7" viewBox="0 0 5 7"><path d="M0,0V6.5L5,3.25Z" fill="#777"/></svg>
<div class="t" style="left:945px;top:629.53px;font-size:10px;line-height:10px;font-weight:normal;color:#e0e0e0;">GAFFERBOT</div>
<div class="t" style="left:945px;top:649.53px;font-size:10px;line-height:10px;font-weight:normal;color:#e0e0e0;">camera</div>
<div style="position:absolute;left:6px;top:948px;width:1268px;height:33px;background:#444444;border-radius:3px;box-shadow:inset 1px 1px 0 #4c4c4c"></div>
<svg style="position:absolute;left:11px;top:953px;" width="6" height="16" viewBox="0 0 6 16"><circle cx="2.7" cy="2.5" r="1.8" fill="#3c3c3c"/><circle cx="2.7" cy="8" r="1.8" fill="#3c3c3c"/><circle cx="2.7" cy="13.5" r="1.8" fill="#3c3c3c"/></svg>
<div style="position:absolute;left:18.4px;top:952.3px;width:31.8px;height:16.8px;background:#5f5f5f;border-radius:2px;box-shadow:inset -1px -1px 0 #353535"></div>
<div class="t" style="left:20.7px;top:956.63px;font-size:10px;line-height:10px;font-weight:normal;color:#e0e0e0;">1</div>
<div style="position:absolute;left:53.6px;top:952.3px;width:31.8px;height:16.8px;background:#5f5f5f;border-radius:2px;box-shadow:inset -1px -1px 0 #353535"></div>
<div class="t" style="left:55.9px;top:956.63px;font-size:10px;line-height:10px;font-weight:normal;color:#e0e0e0;">1</div>
<div style="position:absolute;left:88px;top:951.5px;width:2px;height:19px;background:#f0e020"></div>
<div class="t" style="left:94px;top:957.03px;font-size:10px;line-height:10px;font-weight:bold;color:#dccb2e;">1</div>
<svg style="position:absolute;left:0px;top:0px;" width="1280" height="987" viewBox="0 0 1280 987"><rect x="96.80" y="964" width="2" height="5.5" fill="#2a2a2a"/><rect x="107.19" y="964" width="2" height="5.5" fill="#2a2a2a"/><rect x="117.57" y="964" width="2" height="5.5" fill="#2a2a2a"/><rect x="127.95" y="964" width="2" height="5.5" fill="#2a2a2a"/><rect x="138.34" y="959.5" width="2" height="10.0" fill="#2a2a2a"/><rect x="148.72" y="964" width="2" height="5.5" fill="#2a2a2a"/><rect x="159.11" y="964" width="2" height="5.5" fill="#2a2a2a"/><rect x="169.50" y="964" width="2" height="5.5" fill="#2a2a2a"/><rect x="179.88" y="964" width="2" height="5.5" fill="#2a2a2a"/><rect x="190.26" y="955" width="2" height="14.5" fill="#2a2a2a"/><rect x="200.65" y="964" width="2" height="5.5" fill="#2a2a2a"/><rect x="211.03" y="964" width="2" height="5.5" fill="#2a2a2a"/><rect x="221.42" y="964" width="2" height="5.5" fill="#2a2a2a"/><rect x="231.81" y="964" width="2" height="5.5" fill="#2a2a2a"/><rect x="242.19" y="959.5" width="2" height="10.0" fill="#2a2a2a"/><rect x="252.57" y="964" width="2" height="5.5" fill="#2a2a2a"/><rect x="262.96" y="964" width="2" height="5.5" fill="#2a2a2a"/><rect x="273.34" y="964" width="2" height="5.5" fill="#2a2a2a"/><rect x="283.73" y="964" width="2" height="5.5" fill="#2a2a2a"/><rect x="294.12" y="955" width="2" height="14.5" fill="#2a2a2a"/><rect x="304.50" y="964" width="2" height="5.5" fill="#2a2a2a"/><rect x="314.88" y="964" width="2" height="5.5" fill="#2a2a2a"/><rect x="325.27" y="964" width="2" height="5.5" fill="#2a2a2a"/><rect x="335.65" y="964" width="2" height="5.5" fill="#2a2a2a"/><rect x="346.04" y="959.5" width="2" height="10.0" fill="#2a2a2a"/><rect x="356.43" y="964" width="2" height="5.5" fill="#2a2a2a"/><rect x="366.81" y="964" width="2" height="5.5" fill="#2a2a2a"/><rect x="377.19" y="964" width="2" height="5.5" fill="#2a2a2a"/><rect x="387.58" y="964" width="2" height="5.5" fill="#2a2a2a"/><rect x="397.97" y="955" width="2" height="14.5" fill="#2a2a2a"/><rect x="408.35" y="964" width="2" height="5.5" fill="#2a2a2a"/><rect x="418.74" y="964" width="2" height="5.5" fill="#2a2a2a"/><rect x="429.12" y="964" width="2" height="5.5" fill="#2a2a2a"/><rect x="439.50" y="964" width="2" height="5.5" fill="#2a2a2a"/><rect x="449.89" y="959.5" width="2" height="10.0" fill="#2a2a2a"/><rect x="460.27" y="964" width="2" height="5.5" fill="#2a2a2a"/><rect x="470.66" y="964" width="2" height="5.5" fill="#2a2a2a"/><rect x="481.05" y="964" width="2" height="5.5" fill="#2a2a2a"/><rect x="491.43" y="964" width="2" height="5.5" fill="#2a2a2a"/><rect x="501.81" y="955" width="2" height="14.5" fill="#2a2a2a"/><rect x="512.20" y="964" width="2" height="5.5" fill="#2a2a2a"/><rect x="522.58" y="964" width="2" height="5.5" fill="#2a2a2a"/><rect x="532.97" y="964" width="2" height="5.5" fill="#2a2a2a"/><rect x="543.36" y="964" width="2" height="5.5" fill="#2a2a2a"/><rect x="553.74" y="959.5" width="2" height="10.0" fill="#2a2a2a"/><rect x="564.12" y="964" width="2" height="5.5" fill="#2a2a2a"/><rect x="574.51" y="964" width="2" height="5.5" fill="#2a2a2a"/><rect x="584.89" y="964" width="2" height="5.5" fill="#2a2a2a"/><rect x="595.28" y="964" width="2" height="5.5" fill="#2a2a2a"/><rect x="605.66" y="955" width="2" height="14.5" fill="#2a2a2a"/><rect x="616.05" y="964" width="2" height="5.5" fill="#2a2a2a"/><rect x="626.43" y="964" width="2" height="5.5" fill="#2a2a2a"/><rect x="636.82" y="964" width="2" height="5.5" fill="#2a2a2a"/><rect x="647.20" y="964" width="2" height="5.5" fill="#2a2a2a"/><rect x="657.59" y="959.5" width="2" height="10.0" fill="#2a2a2a"/><rect x="667.97" y="964" width="2" height="5.5" fill="#2a2a2a"/><rect x="678.36" y="964" width="2" height="5.5" fill="#2a2a2a"/><rect x="688.74" y="964" width="2" height="5.5" fill="#2a2a2a"/><rect x="699.13" y="964" width="2" height="5.5" fill="#2a2a2a"/><rect x="709.51" y="955" width="2" height="14.5" fill="#2a2a2a"/><rect x="719.90" y="964" width="2" height="5.5" fill="#2a2a2a"/><rect x="730.28" y="964" width="2" height="5.5" fill="#2a2a2a"/><rect x="740.67" y="964" width="2" height="5.5" fill="#2a2a2a"/><rect x="751.05" y="964" width="2" height="5.5" fill="#2a2a2a"/><rect x="761.44" y="959.5" width="2" height="10.0" fill="#2a2a2a"/><rect x="771.82" y="964" width="2" height="5.5" fill="#2a2a2a"/><rect x="782.21" y="964" width="2" height="5.5" fill="#2a2a2a"/><rect x="792.59" y="964" width="2" height="5.5" fill="#2a2a2a"/><rect x="802.98" y="964" width="2" height="5.5" fill="#2a2a2a"/><rect x="813.36" y="955" width="2" height="14.5" fill="#2a2a2a"/><rect x="823.75" y="964" width="2" height="5.5" fill="#2a2a2a"/><rect x="834.13" y="964" width="2" height="5.5" fill="#2a2a2a"/><rect x="844.52" y="964" width="2" height="5.5" fill="#2a2a2a"/><rect x="854.90" y="964" width="2" height="5.5" fill="#2a2a2a"/><rect x="865.29" y="959.5" width="2" height="10.0" fill="#2a2a2a"/><rect x="875.67" y="964" width="2" height="5.5" fill="#2a2a2a"/><rect x="886.06" y="964" width="2" height="5.5" fill="#2a2a2a"/><rect x="896.44" y="964" width="2" height="5.5" fill="#2a2a2a"/><rect x="906.83" y="964" width="2" height="5.5" fill="#2a2a2a"/><rect x="917.21" y="955" width="2" height="14.5" fill="#2a2a2a"/><rect x="927.60" y="964" width="2" height="5.5" fill="#2a2a2a"/><rect x="937.98" y="964" width="2" height="5.5" fill="#2a2a2a"/><rect x="948.37" y="964" width="2" height="5.5" fill="#2a2a2a"/><rect x="958.75" y="964" width="2" height="5.5" fill="#2a2a2a"/><rect x="969.14" y="959.5" width="2" height="10.0" fill="#2a2a2a"/><rect x="979.52" y="964" width="2" height="5.5" fill="#2a2a2a"/><rect x="989.91" y="964" width="2" height="5.5" fill="#2a2a2a"/><rect x="1000.29" y="964" width="2" height="5.5" fill="#2a2a2a"/><rect x="1010.68" y="964" width="2" height="5.5" fill="#2a2a2a"/><rect x="1021.06" y="955" width="2" height="14.5" fill="#2a2a2a"/><rect x="1031.45" y="964" width="2" height="5.5" fill="#2a2a2a"/><rect x="1041.84" y="964" width="2" height="5.5" fill="#2a2a2a"/><rect x="1052.22" y="964" width="2" height="5.5" fill="#2a2a2a"/><rect x="1062.61" y="964" width="2" height="5.5" fill="#2a2a2a"/><rect x="1072.99" y="959.5" width="2" height="10.0" fill="#2a2a2a"/><rect x="1083.38" y="964" width="2" height="5.5" fill="#2a2a2a"/><rect x="1093.76" y="964" width="2" height="5.5" fill="#2a2a2a"/><rect x="1104.14" y="964" width="2" height="5.5" fill="#2a2a2a"/><rect x="1114.53" y="964" width="2" height="5.5" fill="#2a2a2a"/></svg>
<svg style="position:absolute;left:1119px;top:953px;" width="36" height="16" viewBox="0 0 36 16"><rect x="1" y="1.5" width="2" height="13" fill="#8a8a8a"/><path d="M8,3V13L3,8Z" fill="#8a8a8a"/><path d="M12,2L22,8L12,14L14.5,8Z" fill="#8a8a8a"/><path d="M28,3V13L33,8Z" fill="#8a8a8a"/><rect x="33" y="1.5" width="2" height="13" fill="#8a8a8a"/></svg>
<div style="position:absolute;left:1157.5px;top:952.5px;width:40.5px;height:16.5px;background:#5f5f5f;border-radius:2px;box-shadow:inset -1px -1px 0 #353535"></div>
<div class="t" style="left:1159.8px;top:956.83px;font-size:10px;line-height:10px;font-weight:normal;color:#e0e0e0;">1</div>
<div style="position:absolute;left:1201px;top:952.5px;width:32px;height:16.5px;background:#5f5f5f;border-radius:2px;box-shadow:inset -1px -1px 0 #353535"></div>
<div class="t" style="left:1203.3px;top:956.83px;font-size:10px;line-height:10px;font-weight:normal;color:#e0e0e0;">100</div>
<div style="position:absolute;left:1236px;top:952.5px;width:32px;height:16.5px;background:#5f5f5f;border-radius:2px;box-shadow:inset -1px -1px 0 #353535"></div>
<div class="t" style="left:1238.3px;top:956.83px;font-size:10px;line-height:10px;font-weight:normal;color:#e0e0e0;">100</div>
</body></html>
